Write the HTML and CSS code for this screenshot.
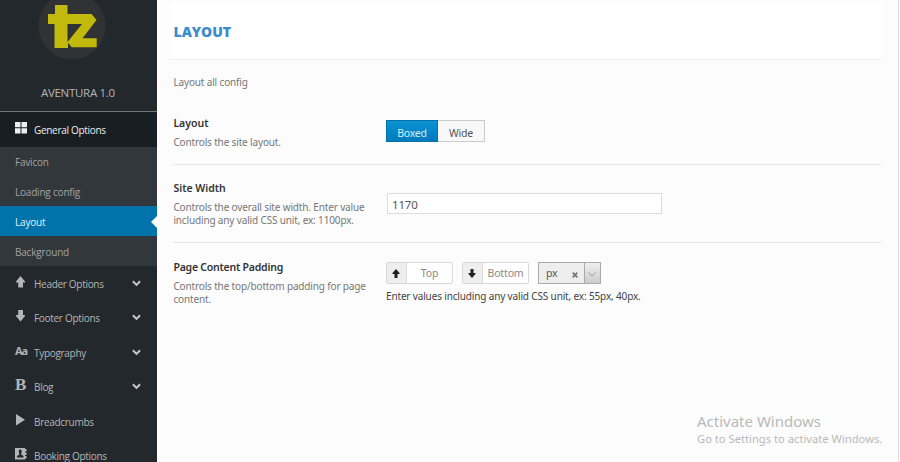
FILE: index.html
```html
<!DOCTYPE html>
<html lang="en">
<head>
<meta charset="utf-8">
<title>Layout</title>
<link rel="stylesheet" href="styles.css">
</head>
<body>
<div class="app">
  <aside class="sidebar">
    <div class="brand">
      <svg class="logo" width="68" height="68" viewBox="0 0 68 68"><circle cx="34" cy="34" r="33.5" fill="#303234"/><path fill="#c1ba0c" d="M17 13H29.500V22H53.500L58.500 28L44.500 46.300H58.700V55.300H33.700L30 50.700V56H16.500V32H10V22H17Z"/><path fill="#303234" d="M29.500 32H44L29.500 50Z"/></svg>
      <div class="version">AVENTURA 1.0</div>
    </div>
    <nav>
      <a class="item current"><svg class="ico" viewBox="0 0 12 12"><path d="M0 0H5.500V5.200H0ZM6.500 0H12V5.200H6.500ZM0 6.200H5.500V11.500H0ZM6.500 6.200H12V11.500H6.500Z"/></svg><span>General Options</span></a>
      <div class="submenu">
        <a>Favicon</a><a>Loading config</a><a class="active">Layout</a><a>Background</a>
      </div>
      <a class="item"><svg class="ico" viewBox="0 0 12 12"><path d="M5.500 0L10 5.500V6.500H8V11.500H3.200V6.500H1V5.500Z"/></svg><span>Header Options</span><svg class="chev" viewBox="0 0 8 6"><path d="M.8 1L4 4.200L7.200 1"/></svg></a>
      <a class="item"><svg class="ico" viewBox="0 0 12 12"><path d="M5.500 11.500L10 6V5H8V0H3.200V5H1V6Z"/></svg><span>Footer Options</span><svg class="chev" viewBox="0 0 8 6"><path d="M.8 1L4 4.200L7.200 1"/></svg></a>
      <a class="item"><b class="ico aa">Aa</b><span>Typography</span><svg class="chev" viewBox="0 0 8 6"><path d="M.8 1L4 4.200L7.200 1"/></svg></a>
      <a class="item"><b class="ico bold">B</b><span>Blog</span><svg class="chev" viewBox="0 0 8 6"><path d="M.8 1L4 4.200L7.200 1"/></svg></a>
      <a class="item"><svg class="ico" viewBox="0 0 12 12"><path d="M1 0L10 5.700L1 11.500Z"/></svg><span>Breadcrumbs</span></a>
      <a class="item"><svg class="ico" viewBox="0 0 12 12"><path fill-rule="evenodd" d="M0 0H10V1H11.500V3.500H10V4.500H11.500V7H10V8H11.500V10.500H10V11.500H0ZM5.200 1.500C3.500 1.500 3.500 4 4.300 5.500V6.500L2 8V9.500H8.500V8L6.200 6.500V5.500C7 4 7 1.500 5.200 1.500Z"/></svg><span>Booking Options</span></a>
    </nav>
  </aside>
  <main class="content">
    <header class="heading"><h1>LAYOUT</h1></header>
    <p class="intro">Layout all config</p>
    <section class="field layout-field">
      <div class="label"><h2>Layout</h2><p>Controls the site layout.</p></div>
      <div class="control"><div class="switch"><span class="on">Boxed</span><span>Wide</span></div></div>
    </section>
    <section class="field width-field">
      <div class="label"><h2>Site Width</h2><p>Controls the overall site width. Enter value<br>including any valid CSS unit, ex: 1100px.</p></div>
      <div class="control"><div class="input">1170</div></div>
    </section>
    <section class="field padding-field">
      <div class="label"><h2 class="tight">Page Content Padding</h2><p>Controls the top/bottom padding for page<br>content.</p></div>
      <div class="control">
        <div class="spacing">
          <div class="group"><i><svg viewBox="0 0 8 9"><path d="M4 0L7.500 4V5H5.500V9H2.500V5H.5V4Z"/></svg></i><span>Top</span></div>
          <div class="group"><i><svg viewBox="0 0 8 9"><path d="M4 9L7.500 5V4H5.500V0H2.500V4H.5V5Z"/></svg></i><span>Bottom</span></div>
          <div class="select"><span>px</span><svg class="clear" viewBox="0 0 6 6"><path d="M.7 .7L5.300 5.300M5.300 .7L.7 5.300"/></svg><i><svg viewBox="0 0 8 5"><path d="M.5 .5L4 4L7.500 .5"/></svg></i></div>
        </div>
        <p class="hint">Enter values including any valid CSS unit, ex: 55px, 40px.</p>
      </div>
    </section>
    <div class="watermark"><div class="wm-title">Activate Windows</div><div class="wm-text">Go to Settings to activate Windows.</div></div>
  </main>
</div>
</body>
</html>
```
FILE: styles.css
```css
* { box-sizing: border-box; }
body { margin: 0; width: 900px; height: 462px; overflow: hidden; font-family: "Noto Sans", "Open Sans", sans-serif; }
h1, h2, p { margin: 0; }
.app { display: flex; height: 462px; }
.sidebar { width: 157px; height: 462px; overflow: hidden; background: #23282d; color: #b4b5b6; font: 10px/14px "Open Sans", sans-serif; letter-spacing: -.3px; }
.brand { display: flow-root; height: 112px; padding-left: 38px; border-bottom: 1px solid #74777a; }
.logo { display: block; margin-top: -8px; }
.version { width: 80px; margin: 25px 0 0 3px; font-size: 11.5px; line-height: 16px; white-space: nowrap; }
.item { display: flex; align-items: center; height: 34.5px; padding: 0 16px 0 15px; }
.item span { flex: 1; white-space: nowrap; padding-top: 1px; }
.ico { width: 12px; height: 12px; margin: -3px 7px 0 0; fill: currentColor; }
.aa { font: bold 11px/12px "Open Sans", sans-serif; letter-spacing: -1.2px; }
.bold { font: bold 17px/12px "Liberation Serif", serif; }
.chev { width: 9px; height: 7px; fill: none; stroke: #c6c7c8; stroke-width: 1.8; }
.current { height: 35px; background: #191e23; color: #eee; }
.submenu { height: 119px; background: #32373c; color: #a0a3a6; }
.submenu a { display: flex; align-items: center; height: 30px; padding: 1px 0 0 15px; letter-spacing: -.2px; }
.submenu a:first-child { height: 29px; }
.submenu .active { background: #0073aa; color: #e4f1f7; }
.submenu .active::after { content: ""; margin-left: auto; border: 6px solid transparent; border-right-color: #fcfcfc; border-left: 0; }
.content { width: 742px; height: 462px; padding: 3px 17px 0 12px; background: #fcfcfc; border-right: 1px solid #dedede; display: flex; flex-direction: column; color: #777; font-size: 10px; line-height: 13px; letter-spacing: -.15px; }
.heading { height: 57px; background: #fff; border-bottom: 1px solid #f1f1f1; padding: 19px 0 0 4.5px; }
.heading h1 { font: 800 14px/20px "Open Sans", sans-serif; letter-spacing: 0; color: #3b8bce; }
.intro { height: 46px; padding: 16px 0 0 4.4px; }
.field { display: flex; margin-left: 4.4px; }
.label { width: 212.6px; white-space: nowrap; }
.label h2 { font-size: 10.5px; line-height: 14px; font-weight: 600; letter-spacing: 0; color: #333; margin-bottom: 6px; }
.label .tight { letter-spacing: -.22px; }
.layout-field { height: 59px; padding-top: 10px; border-bottom: 1px solid #e7e7e7; }
.width-field { height: 78px; padding-top: 16px; border-bottom: 1px solid #e7e7e7; }
.padding-field { padding-top: 17px; }
.switch { display: flex; width: 99px; height: 22px; margin-top: 4px; }
.switch span { width: 47px; border: 1px solid #ccc; border-left: 0; background: #f8f8f8; color: #555; text-align: center; font-size: 10.5px; letter-spacing: -.2px; line-height: 24px; }
.switch .on { width: 52px; border: 1px solid #0073aa; background: linear-gradient(#0c92d3, #007bbd); color: #d8effa; }
.input { width: 275px; height: 21px; margin: 12px 0 0 1px; border: 1px solid #ddd; background: #fff; color: #555; padding-left: 4px; font-size: 11.5px; line-height: 21px; }
.spacing { display: flex; margin-top: 2px; gap: 9px; }
.group { display: flex; width: 67px; height: 22px; border: 1px solid #d8d8d8; border-radius: 2px; background: #fff; }
.group i { display: flex; align-items: center; justify-content: center; width: 20px; background: #eee; border-right: 1px solid #ddd; }
.group svg { width: 8px; height: 9px; fill: #222; }
.group span { flex: 1; text-align: center; line-height: 21px; font-size: 10.5px; color: #888; }
.select { display: flex; align-items: center; width: 63px; height: 22px; border: 1px solid #aaa; background: #eee; color: #555; font-size: 10.5px; padding-left: 7px; }
.clear { width: 6px; height: 6px; margin: 3px 0 0 auto; stroke: #777; stroke-width: 1.7; }
.select i { display: flex; align-items: center; justify-content: center; width: 16px; height: 20px; margin-left: 6px; border-left: 1px solid #aaa; background: linear-gradient(#eee, #ccc); }
.select i svg { width: 8px; height: 5px; margin-top: 3px; fill: none; stroke: #999; }
.hint { margin-top: 6px; color: #444; white-space: nowrap; }
.watermark { margin: auto 0 16px 528px; color: #b9b9b9; white-space: nowrap; letter-spacing: 0; }
.wm-title { font-size: 15px; line-height: 20px; }
.wm-text { font-size: 11.2px; line-height: 15px; }
```
